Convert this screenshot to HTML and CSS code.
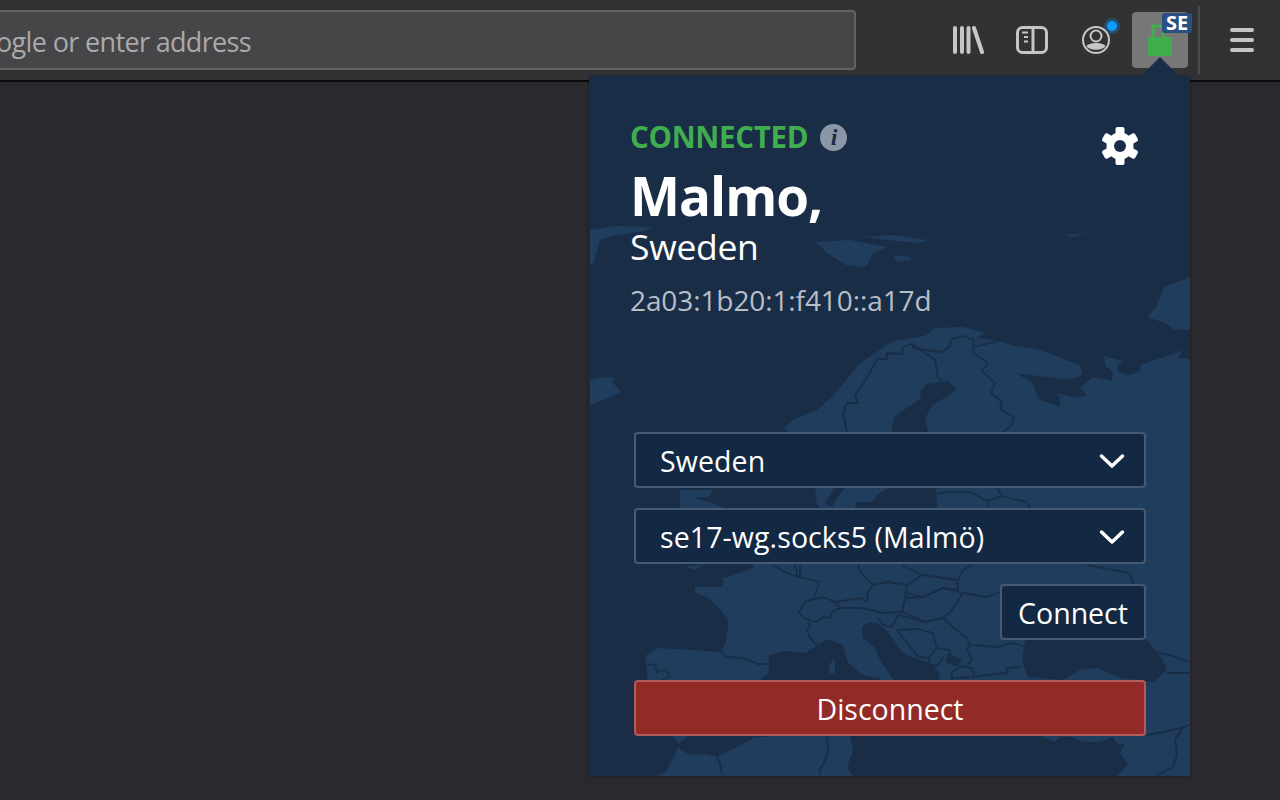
FILE: index.html
```html
<!DOCTYPE html>
<html lang="en">
<head>
    <meta charset="UTF-8">
    <meta name="viewport" content="width=device-width, initial-scale=1.0">
    <title>Connected</title>
    <link rel="stylesheet" href="styles.css">
</head>
<body>
    <div class="toolbar">
        <div class="urlbar"><span class="url-text">ogle or enter address</span></div>
        <div class="tool-group">
            <div class="tool">
                <svg width="32" height="28" viewBox="0 0 32 28" fill="none" stroke="#c6c6c8" stroke-width="4" stroke-linecap="round">
                    <path d="M3 2V26M10 2V26M16.500 2V26M22 2L30 26"/>
                </svg>
            </div>
            <div class="tool">
                <svg width="32" height="28" viewBox="0 0 32 28" fill="none" stroke="#c6c6c8">
                    <rect x="1.500" y="1.500" width="29" height="25" rx="5" stroke-width="3"/>
                    <path d="M17 2V26" stroke-width="3"/>
                    <path d="M6 6.500H12M8 11H12M8 15.500H12" stroke-width="2"/>
                </svg>
            </div>
            <div class="tool tool-account">
                <svg width="30" height="30" viewBox="0 0 30 30" fill="none">
                    <circle cx="15" cy="15" r="13" stroke="#c6c6c8" stroke-width="2"/>
                    <circle cx="15" cy="11" r="5.500" stroke="#c6c6c8" stroke-width="2"/>
                    <path d="M5.500 21C8 17 22 17 24.500 21C22 26 8 26 5.500 21Z" fill="#c6c6c8"/>
                </svg>
                <span class="dot"></span>
            </div>
            <div class="tool tool-active">
                <svg width="26" height="34" viewBox="0 0 26 34">
                    <path d="M6 15V2H16V15" fill="none" stroke="#3fae4b" stroke-width="3"/>
                    <rect x="1" y="13" width="24" height="19" rx="1" fill="#3fae4b"/>
                </svg>
                <span class="badge">SE</span>
            </div>
        </div>
        <div class="sep"></div>
        <div class="tool tool-menu">
            <div class="burger"><i></i><i></i><i></i></div>
        </div>
    </div>

    <div class="popup">
        <svg class="arrow" width="42" height="20" viewBox="0 0 42 20"><path d="M21 0L41 20H1Z"/></svg>
        <div class="panel">
            <svg class="map" viewBox="589 76 601 700" preserveAspectRatio="none">
                <g fill="#213d5d">
                    <path d="M590 230L613 226L653 227L644 231L613 236L600 240L594 263L590 265Z"/>
                    <path d="M816 242L850 240L887 247L873 253L866 267L846 265L827 253Z"/>
                    <path d="M864 237L892 235L927 240L919 243L888 240Z"/>
                    <path d="M894 255L910 257L911 260L896 262Z"/>
                    <path d="M1065 235L1089 233L1072 237Z"/>
                    <path d="M1190 277L1164 287L1156 307L1147 317L1165 323L1173 329L1190 330Z"/>
                    <path d="M590 380L605 377L615 378L613 383L621 392L609 398L590 405Z"/>
                    <path d="M680 490L713 490L708 497L692 497L723 507L700 520L680 510Z"/>
                    <path d="M784 428L793 420L817 410L832 397L860 363L893 341L925 336L935 328L963 327L985 333L977 338L998 341L1015 346L1037 349L1080 365L1082 373L1078 378L1080 388L1093 377L1112 381L1113 372L1105 365L1105 358L1100 355L1123 361L1117 365L1118 372L1128 375L1140 372L1141 365L1183 350L1178 358L1190 359L1190 776L1117 776L1128 765L1120 753L1125 743L1118 745L1113 737L1100 742L1083 742L1073 737L1060 737L1055 742L1043 737L1043 700L648 700L647 667L645 656L658 648L721 652L726 642L728 627L728 619L718 607L707 597L695 593L695 587L723 587L723 577L725 578L753 568L753 560L800 530L820 507L817 504L815 488L800 450Z"/>
                    <path d="M685 567L705 564L695 570Z"/>
                    <path d="M672 736L688 736L679 744Z"/>
                    <path d="M658 776L667 770L678 748L690 755L703 754L717 757L737 747L753 738L770 736L850 736L853 750L847 767L853 776Z"/>
                </g>
                <g fill="#1a2d47">
                    <path d="M920 392L927 384L948 381L957 390L933 405L925 418L930 440H890L894 417L921 398Z"/>
                    <path d="M1015 373L1063 379L1078 378L1080 388L1087 395L1078 398L1055 393L1060 397L1060 407L1038 399L1033 383Z"/>
                    <path d="M888 488L878 494L872 502L857 502L855 507L850 530L940 530L937 504L936 488Z"/>
                    <path d="M835 488L825 503L832 507L840 494L845 488Z"/>
                    <path d="M769 655L785 651L805 653L828 639L843 645L848 663L863 675L880 678L880 710H750L760 680L769 673Z"/>
                    <path d="M862 627L868 623L877 623L888 632L903 653L933 665L939 673L940 690H900L880 660L875 648L863 638Z"/>
                    <path d="M948 653L962 660L958 667L945 662Z"/>
                    <path d="M1028 620L1130 620L1163 660L1167 670L1153 682L1120 678L1097 668L1080 670L1063 680L1028 677L1022 660Z"/>
                </g>
                <g fill="#213d5d">
                    <path d="M829 665L835 658L835 673L830 674Z"/>
                    <path d="M842 497L852 500L850 506L844 504Z"/>
                </g>
                <g fill="#1a2d47">
                    <path d="M990 752L1000 755L1017 757L1004 756Z"/>
                    <path d="M1083 758L1097 755L1093 761L1085 761Z"/>
                </g>
                <g fill="none" stroke="#1a2d47" stroke-width="1.800">
                    <path d="M847 432L843 413L847 403L858 403L855 396L867 378L877 359L887 359L887 353L902 354L903 347L912 344L935 360L938 378L942 381"/>
                    <path d="M912 347L925 350L942 352L949 347L952 339L963 336L974 340L973 353L988 363L982 371L995 383L991 393L1002 402L1000 409L1014 417L1012 425L1002 433"/>
                    <path d="M974 347L998 341"/>
                    <path d="M936 494L947 492L970 492L980 497L987 501L1002 496L997 488M987 501L988 508M1002 496L1013 499L1027 502L1030 508"/>
                    <path d="M773 565L787 573L795 576L807 579L819 582L814 599M795 565L797 571V576H800V565"/>
                    <path d="M806 601L823 597L835 602L840 608L832 612L830 618L822 617L817 622L808 620L803 617L799 612Z"/>
                    <path d="M808 622L810 628L807 630L810 638L817 645"/>
                    <path d="M835 602L860 598L867 602L868 592L873 585L861 573L858 565"/>
                    <path d="M873 585L888 582L907 585L905 598L902 612L883 613L862 608L840 608"/>
                    <path d="M902 565L922 575L907 585M923 575L943 578L958 580L958 590L943 588L923 597L907 593M972 565L963 570L958 580"/>
                    <path d="M905 598L923 597L943 588L963 593L952 610L943 618L925 622L902 612M963 593L987 597L1000 592"/>
                    <path d="M943 618L953 627L967 638L970 645L997 647L1013 643L1027 647"/>
                    <path d="M877 617L883 625L892 627L898 615L925 622"/>
                    <path d="M897 630L917 629L933 633L937 648L928 658L918 657Z"/>
                    <path d="M937 648L950 650L950 655M970 645L967 649L972 660L967 665"/>
                    <path d="M952 680L952 672L962 666L972 668L975 677"/>
                    <path d="M930 658L928 665L938 665L943 657"/>
                    <path d="M952 678L973 677L988 675L1008 673L1007 668L1022 667"/>
                    <path d="M1087 565L1130 573L1133 585"/>
                    <path d="M721 652L727 657L743 658L758 664L769 664"/>
                    <path d="M648 664L655 665L657 672L665 670L670 676L662 680"/>
                    <path d="M1143 649L1170 655L1190 662M1167 673H1190"/>
                    <path d="M1147 735L1163 732L1182 728L1190 725M1182 728L1175 740L1177 755L1173 767L1157 775"/>
                    <path d="M717 757L720 763L722 775M827 736L828 752L823 765L819 770L821 775"/>
                </g>
            </svg>

            <div class="head">
                <div>
                    <div class="status">CONNECTED <span class="info">i</span></div>
                    <h1 class="city">Malmo,</h1>
                    <div class="country">Sweden</div>
                    <div class="ip">2a03:1b20:1:f410::a17d</div>
                </div>
                <svg class="gear" width="38" height="38" viewBox="0 0 38 38" fill="#fff">
                    <rect x="14.500" y="0" width="9" height="38" rx="2"/>
                    <rect x="14.500" y="0" width="9" height="38" rx="2" transform="rotate(60 19 19)"/>
                    <rect x="14.500" y="0" width="9" height="38" rx="2" transform="rotate(120 19 19)"/>
                    <circle cx="19" cy="19" r="13.500"/>
                    <circle cx="19" cy="19" r="6" fill="#1a2d47"/>
                </svg>
            </div>

            <div class="form">
                <div class="picker">Sweden
                    <svg width="26" height="16" viewBox="0 0 26 16" fill="none" stroke="#fff" stroke-width="3.500" stroke-linecap="round" stroke-linejoin="round"><path d="M2.500 3L13 13L23.500 3"/></svg>
                </div>
                <div class="picker">se17-wg.socks5 (Malmö)
                    <svg width="26" height="16" viewBox="0 0 26 16" fill="none" stroke="#fff" stroke-width="3.500" stroke-linecap="round" stroke-linejoin="round"><path d="M2.500 3L13 13L23.500 3"/></svg>
                </div>
                <button class="btn btn-connect">Connect</button>
                <button class="btn btn-disconnect">Disconnect</button>
            </div>
        </div>
    </div>
</body>
</html>
```

FILE: styles.css
```css
* {
    box-sizing: border-box;
}
body {
    margin: 0;
    height: 800px;
    overflow: hidden;
    background-color: #2a2a2e;
    font-family: "Open Sans", "Noto Sans", sans-serif;
    color: #fff;
}
.toolbar {
    height: 82px;
    background-color: #323234;
    border-bottom: 2px solid #0c0c0d;
    display: flex;
    align-items: center;
}
.urlbar {
    width: 856px;
    height: 60px;
    padding-top: 2px;
    background-color: #464648;
    border: 2px solid #636365;
    border-left: none;
    border-radius: 0 4px 4px 0;
    display: flex;
    align-items: center;
    overflow: hidden;
}
.url-text {
    margin-left: -4px;
    font-size: 27px;
    letter-spacing: -0.65px;
    color: #aaaaac;
    white-space: nowrap;
}
.tool-group {
    margin-left: 84px;
    display: flex;
    gap: 8px;
}
.tool {
    width: 56px;
    height: 56px;
    display: flex;
    align-items: center;
    justify-content: center;
    position: relative;
    border-radius: 4px;
}
.tool-active {
    background-color: #777778;
}
.tool-active svg {
    margin-top: 2px;
}
.dot {
    position: absolute;
    left: 39px;
    top: 9px;
    width: 10px;
    height: 10px;
    border-radius: 50%;
    background-color: #0a9dff;
    box-shadow: 0 0 0 3px rgba(10, 157, 255, 0.25);
}
.badge {
    position: absolute;
    left: 30px;
    top: 1px;
    width: 30px;
    height: 20px;
    border-radius: 3px;
    background-color: #2b4f81;
    font-size: 20px;
    line-height: 20px;
    font-weight: 700;
    text-align: center;
}
.sep {
    width: 2px;
    height: 68px;
    margin-left: 10px;
    background-color: #4c4c4e;
}
.tool-menu {
    margin-left: 14px;
}
.burger {
    display: flex;
    flex-direction: column;
    gap: 6px;
}
.burger i {
    display: block;
    width: 24px;
    height: 4px;
    border-radius: 2px;
    background-color: #c6c6c8;
}

/* popup */
.popup {
    position: absolute;
    left: 589px;
    top: 57px;
    width: 601px;
}
.arrow {
    display: block;
    margin-left: 550px;
    margin-bottom: -1px;
    position: relative;
    z-index: 1;
    fill: #1a2d47;
}
.panel {
    height: 700px;
    position: relative;
    overflow: hidden;
    background-color: #1a2d47;
    box-shadow: 0 0 3px rgba(0, 0, 0, 0.4);
    padding: 41px 44px 40px 45px;
    display: flex;
    flex-direction: column;
    justify-content: space-between;
}
.map {
    position: absolute;
    left: 0;
    top: 0;
    width: 601px;
    height: 700px;
}
.head {
    position: relative;
    display: flex;
    justify-content: space-between;
    align-items: flex-start;
    margin-left: -4px;
}
.gear {
    margin-top: 10px;
    margin-right: 7px;
}
.status {
    display: flex;
    align-items: center;
    gap: 12px;
    font-size: 29.500px;
    line-height: 40px;
    font-weight: 700;
    letter-spacing: -0.3px;
    color: #40ad4e;
}
.info {
    width: 27px;
    height: 27px;
    border-radius: 50%;
    background-color: #8b97a6;
    color: #1a2d47;
    font-family: "Liberation Serif", serif;
    font-style: italic;
    font-size: 24px;
    line-height: 27px;
    text-align: center;
}
.city {
    margin: 11px 0 0;
    font-size: 53px;
    line-height: 56px;
    font-weight: 700;
    letter-spacing: -1px;
}
.country {
    font-size: 35.500px;
    line-height: 36px;
    margin-top: 4px;
    letter-spacing: -0.3px;
}
.ip {
    margin-top: 18px;
    font-size: 28px;
    line-height: 36px;
    letter-spacing: -0.1px;
    color: #b8bec8;
}
.form {
    position: relative;
    display: flex;
    flex-direction: column;
    gap: 20px;
}
.picker {
    height: 56px;
    display: flex;
    align-items: center;
    justify-content: space-between;
    padding: 2px 19px 0 24px;
    background-color: #132843;
    border: 2px solid #475a73;
    border-radius: 4px;
    font-size: 28.500px;
    letter-spacing: 0.1px;
}
.btn {
    height: 56px;
    padding-top: 2px;
    border-radius: 4px;
    font-family: inherit;
    font-size: 28.500px;
    color: #fff;
}
.btn-connect {
    align-self: flex-end;
    width: 146px;
    padding: 2px 0 0;
    background-color: #132843;
    border: 2px solid #475a73;
}
.btn-disconnect {
    margin-top: 20px;
    background-color: #922a28;
    border: 2px solid #b35a5a;
}
```
